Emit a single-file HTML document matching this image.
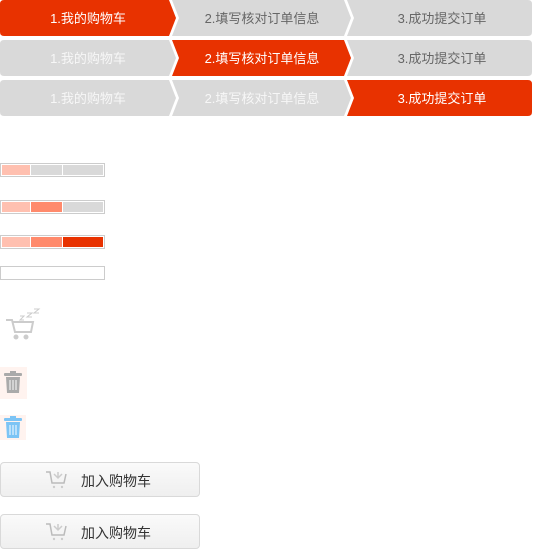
<!DOCTYPE html>
<html><head><meta charset="utf-8"><style>
body{margin:0;width:534px;height:559px;background:#fff;font-family:"Liberation Sans","Noto Sans CJK SC",sans-serif;position:relative;overflow:hidden}
.abs{position:absolute}
.bar{position:absolute;left:0;width:103px;height:12px;border:1px solid #ccc;background:#fff}
.bar i{position:absolute;top:1px;height:10px}
.btn{position:absolute;left:0;width:198px;height:33px;border:1px solid #d9d9d9;border-radius:4px;background:linear-gradient(#fafafa,#efefef)}
.btn span{position:absolute;left:80px;top:8px;font-size:14px;color:#333}
</style></head><body>
<svg class="abs" style="left:0;top:0" width="534" height="120" font-size="13" text-anchor="middle" font-family="Liberation Sans,Noto Sans CJK SC,sans-serif">
<defs>
<path id="s1" d="M4 0H169L176 18L169 36H4Q0 36 0 32V4Q0 0 4 0Z"/>
<path id="s2" d="M172 0H344L351 18L344 36H172L179 18Z"/>
<path id="s3" d="M347 0H528Q532 0 532 4V32Q532 36 528 36H347L354 18Z"/>
</defs>
<g><use href="#s1" fill="#e83200"/><use href="#s2" fill="#d9d9d9"/><use href="#s3" fill="#d9d9d9"/>
<text x="88" y="23" fill="#fff">1.我的购物车</text><text x="262" y="23" fill="#666">2.填写核对订单信息</text><text x="442" y="23" fill="#666">3.成功提交订单</text></g>
<g transform="translate(0,40)"><use href="#s1" fill="#d9d9d9"/><use href="#s2" fill="#e83200"/><use href="#s3" fill="#d9d9d9"/>
<text x="88" y="23" fill="#f7f7f7">1.我的购物车</text><text x="262" y="23" fill="#fff">2.填写核对订单信息</text><text x="442" y="23" fill="#666">3.成功提交订单</text></g>
<g transform="translate(0,80)"><use href="#s1" fill="#d9d9d9"/><use href="#s2" fill="#d9d9d9"/><use href="#s3" fill="#e83200"/>
<text x="88" y="23" fill="#f7f7f7">1.我的购物车</text><text x="262" y="23" fill="#f7f7f7">2.填写核对订单信息</text><text x="442" y="23" fill="#fff">3.成功提交订单</text></g>
</svg>
<div class="bar" style="top:163px"><i style="left:1px;width:28px;background:#ffc0b0"></i><i style="left:30px;width:31px;background:#d9d9d9"></i><i style="left:62px;width:40px;background:#d9d9d9"></i></div>
<div class="bar" style="top:200px"><i style="left:1px;width:28px;background:#ffc0b0"></i><i style="left:30px;width:31px;background:#ff8a6c"></i><i style="left:62px;width:40px;background:#d9d9d9"></i></div>
<div class="bar" style="top:235px"><i style="left:1px;width:28px;background:#ffc0b0"></i><i style="left:30px;width:31px;background:#ff8a6c"></i><i style="left:62px;width:40px;background:#e83200"></i></div>
<div class="bar" style="top:266px"></div>
<svg class="abs" style="left:4px;top:308px" width="40" height="36" fill="none" stroke="#ccc" stroke-width="2">
<path d="M2 12H8L11 24H27L29 14H9"/><circle cx="12" cy="29" r="1.5" fill="#ccc"/><circle cx="22" cy="29" r="1.5" fill="#ccc"/>
<path d="M16 8h4l-4 4h4M23 5h5l-5 4h5M30 1h5l-5 4h5" stroke-width="1"/>
</svg>
<div class="abs" style="left:0;top:367px;width:27px;height:32px;background:#fff3ef"></div>
<svg class="abs" style="left:3px;top:371px" width="20" height="24" fill="#aaa"><rect x="1" y="2" width="18" height="3" rx="1"/><rect x="7" y="0" width="6" height="3"/><path d="M3 6H17L16 22H4Z"/><path d="M7 9V19M10 9V19M13 9V19" stroke="#eee" stroke-width="1.2"/></svg>
<div class="abs" style="left:0;top:415px;width:26px;height:25px;background:#fff3ef"></div>
<svg class="abs" style="left:3px;top:416px" width="20" height="24" fill="#7cc4f5"><rect x="1" y="2" width="18" height="3" rx="1"/><rect x="7" y="0" width="6" height="3"/><path d="M3 6H17L16 22H4Z"/><path d="M7 9V19M10 9V19M13 9V19" stroke="#e6f4fd" stroke-width="1.2"/></svg>
<div class="btn" style="top:462px"><svg class="abs" style="left:44px;top:7px" width="24" height="20" fill="none" stroke="#bbb" stroke-width="1.5"><path d="M1 2H5L7 13H19L21 4"/><path d="M9 4l4 4l4-4M13 8V2" stroke="#ccc"/><circle cx="9" cy="17" r="1.2" fill="#ccc" stroke="none"/><circle cx="17" cy="17" r="1.2" fill="#ccc" stroke="none"/></svg><span>加入购物车</span></div>
<div class="btn" style="top:514px"><svg class="abs" style="left:44px;top:7px" width="24" height="20" fill="none" stroke="#bbb" stroke-width="1.5"><path d="M1 2H5L7 13H19L21 4"/><path d="M9 4l4 4l4-4M13 8V2" stroke="#ccc"/><circle cx="9" cy="17" r="1.2" fill="#ccc" stroke="none"/><circle cx="17" cy="17" r="1.2" fill="#ccc" stroke="none"/></svg><span>加入购物车</span></div>
</body></html>
